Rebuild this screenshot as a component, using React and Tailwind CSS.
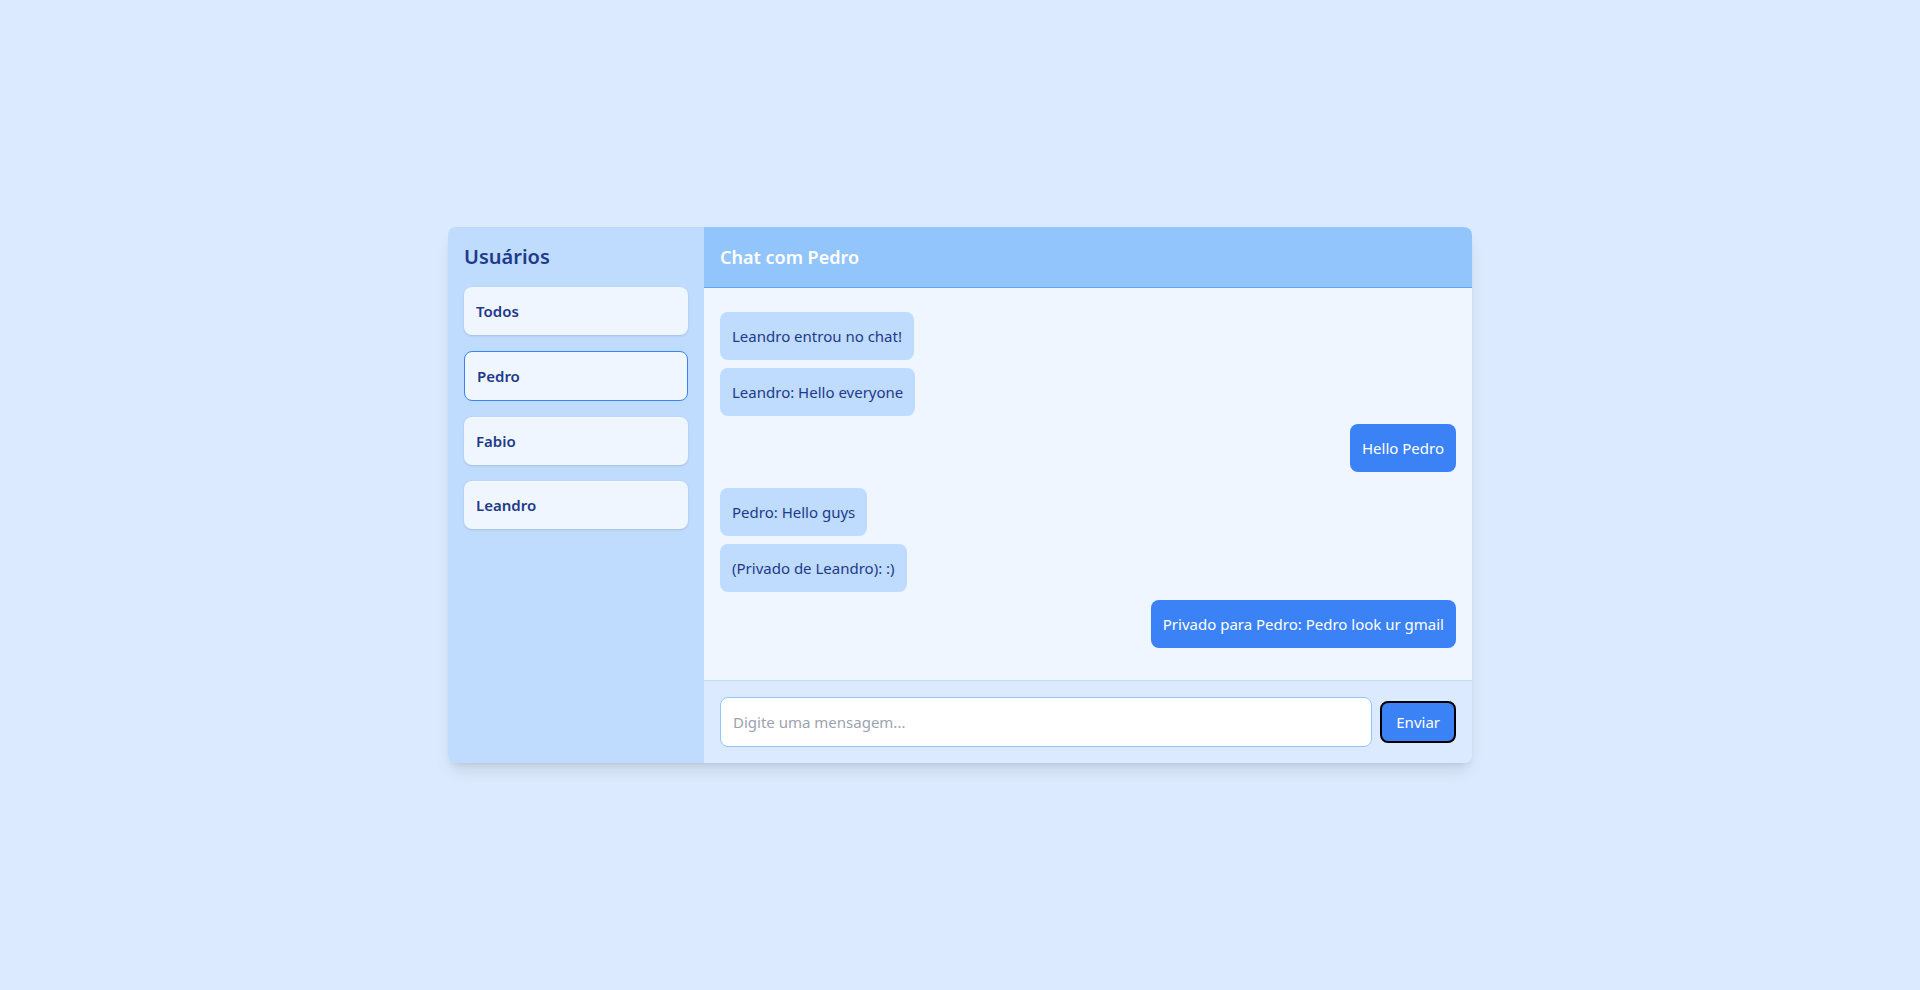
export default function App() {
  const users = ["Todos", "Pedro", "Fabio", "Leandro"];
  const selected = "Pedro";
  const messages = [
    { text: "Leandro entrou no chat!", own: false },
    { text: "Leandro: Hello everyone", own: false },
    { text: "Hello Pedro", own: true },
    { text: "Pedro: Hello guys", own: false },
    { text: "(Privado de Leandro): :)", own: false },
    { text: "Privado para Pedro: Pedro look ur gmail", own: true },
  ];

  return (
    <div
      className="min-h-screen bg-[#dbeafe] flex items-center justify-center"
      style={{ fontFamily: '"Noto Sans", "Open Sans", sans-serif' }}
    >
      <div className="w-[1024px] flex rounded-lg overflow-hidden shadow-lg">
        <aside className="w-64 shrink-0 bg-[#bfdbfe] p-4">
          <h2 className="text-xl font-semibold text-[#1e3a8a] mb-4">Usuários</h2>
          <div className="flex flex-col gap-4">
            {users.map((u) => (
              <button
                key={u}
                className={
                  u === selected
                    ? "text-left p-3 rounded-lg bg-[#eff6ff] border border-[#3b82f6] text-[#1e3a8a] font-semibold text-[15px] leading-6"
                    : "text-left p-3 rounded-lg bg-[#eff6ff] shadow-sm text-[#1e3a8a] font-semibold text-[15px] leading-6"
                }
              >
                {u}
              </button>
            ))}
          </div>
        </aside>

        <main className="flex-1 flex flex-col">
          <header className="bg-[#93c5fd] p-4 border-b border-[#60a5fa]">
            <h3 className="text-lg font-semibold text-white">Chat com Pedro</h3>
          </header>

          <div className="bg-[#eff6ff] pt-6 px-4 pb-4 flex flex-col">
            {messages.map((m, i) => (
              <div
                key={i}
                className={
                  m.own
                    ? "self-end mb-4 p-3 rounded-lg bg-[#3b82f6] text-white text-[15px] leading-6"
                    : "self-start mb-2 p-3 rounded-lg bg-[#bfdbfe] text-[#1e3a8a] text-[15px] leading-6"
                }
              >
                {m.text}
              </div>
            ))}
          </div>

          <div className="bg-[#dbeafe] border-t border-[#bfdbfe] p-4 flex items-center gap-2">
            <input
              className="flex-1 p-3 rounded-lg border border-[#93c5fd] bg-white text-[15px] leading-6 placeholder:text-[#9ca3af] outline-none"
              placeholder="Digite uma mensagem..."
            />
            <button className="h-[42px] px-[14px] rounded-lg bg-[#3b82f6] text-white border-2 border-black text-[15px] leading-6">
              Enviar
            </button>
          </div>
        </main>
      </div>
    </div>
  );
}
